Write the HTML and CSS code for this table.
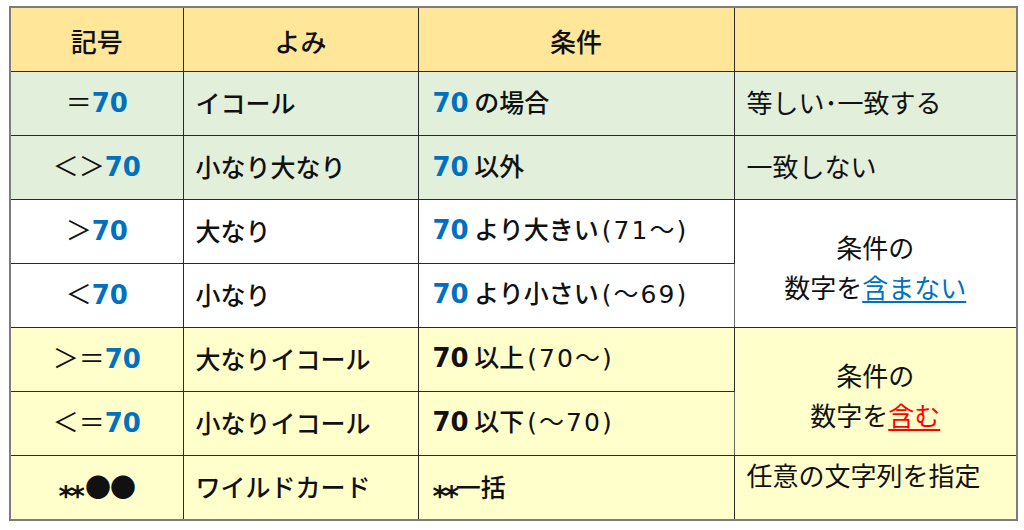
FILE: index.html
```html
<!DOCTYPE html>
<html lang="ja">
<head>
<meta charset="utf-8">
<link rel="stylesheet" href="styles.css">
</head>
<body>
<table class="tbl">
  <colgroup>
    <col class="c1"><col class="c2"><col class="c3"><col class="c4">
  </colgroup>
  <tr class="head">
    <th>記号</th><th>よみ</th><th>条件</th><th class="last"></th>
  </tr>
  <tr class="green">
    <td class="sym"><span class="op">＝</span><span class="num">70</span></td>
    <td class="yomi">イコール</td>
    <td class="cond"><span class="num">70</span> の場合</td>
    <td class="note last">等しい･一致する</td>
  </tr>
  <tr class="green">
    <td class="sym"><span class="op">＜＞</span><span class="num">70</span></td>
    <td class="yomi">小なり大なり</td>
    <td class="cond"><span class="num">70</span> 以外</td>
    <td class="note last">一致しない</td>
  </tr>
  <tr class="white">
    <td class="sym"><span class="op">＞</span><span class="num">70</span></td>
    <td class="yomi">大なり</td>
    <td class="cond"><span class="num">70</span> より大きい<span class="paren">(71～)</span></td>
    <td class="merged last" rowspan="2">条件の<br>数字を<span class="ul-blue">含まない</span></td>
  </tr>
  <tr class="white">
    <td class="sym"><span class="op">＜</span><span class="num">70</span></td>
    <td class="yomi">小なり</td>
    <td class="cond"><span class="num">70</span> より小さい<span class="paren">(～69)</span></td>
  </tr>
  <tr class="yellow">
    <td class="sym"><span class="op">＞＝</span><span class="num">70</span></td>
    <td class="yomi">大なりイコール</td>
    <td class="cond"><span class="numk">70</span> 以上<span class="paren">(70～)</span></td>
    <td class="merged last" rowspan="2">条件の<br>数字を<span class="ul-red">含む</span></td>
  </tr>
  <tr class="yellow">
    <td class="sym"><span class="op">＜＝</span><span class="num">70</span></td>
    <td class="yomi">小なりイコール</td>
    <td class="cond"><span class="numk">70</span> 以下<span class="paren">(～70)</span></td>
  </tr>
  <tr class="yellow">
    <td class="sym"><span class="ast">**</span><span class="dots">●●</span></td>
    <td class="yomi">ワイルドカード</td>
    <td class="cond"><span class="ast">**</span>一括</td>
    <td class="note top last">任意の文字列を指定</td>
  </tr>
</table>
</body>
</html>
```

FILE: styles.css
```css
html, body {
  margin: 0;
  padding: 0;
  background: #ffffff;
}
body {
  font-family: "Noto Sans CJK JP", "Noto Sans", sans-serif;
  color: #111111;
}
.tbl {
  margin: 6px 0 0 9px;
  width: 1007px;
  table-layout: fixed;
  border-collapse: collapse;
  border: 2px solid #7c7c7c;
}
.c1 { width: 173px; }
.c2 { width: 235px; }
.c3 { width: 316px; }
.c4 { width: 283px; }

.tbl th, .tbl td {
  border: 1px solid #2a2a2a;
  padding: 0 0 4px 0;
  font-size: 25px;
  line-height: 32px;
  height: 59px;
  white-space: nowrap;
}
.tbl th.last, .tbl td.last {
  border-left: 1px solid #6a6a6a;
}
.head th {
  background: #ffe699;
  font-weight: 500;
  font-size: 26px;
  text-align: center;
  height: 61px;
  padding: 2px 0 0 0;
}
.green td { background: #e2efda; }
.white td { background: #ffffff; }
.yellow td { background: #ffffcc; }

.sym {
  text-align: center;
}
.op {
  font-weight: 400;
  font-size: 26px;
}
.num {
  font-family: "DejaVu Sans", sans-serif;
  color: #0070c0;
  font-weight: 700;
  font-size: 26px;
}
.numk {
  font-family: "DejaVu Sans", sans-serif;
  font-weight: 700;
  font-size: 26px;
}
.yomi {
  font-weight: 500;
  padding-left: 12px !important;
}
.cond {
  font-weight: 500;
  padding-left: 14px !important;
}
.paren {
  font-family: "DejaVu Sans", "Noto Sans CJK JP", sans-serif;
  font-weight: 400;
  font-size: 25px;
  margin-left: 3px;
  letter-spacing: 2px;
}
.note {
  font-size: 26px !important;
  padding-left: 12px !important;
}
.note.top {
  vertical-align: top;
  height: 60px;
  padding: 3px 0 0 12px !important;
}
.merged {
  text-align: center;
  font-size: 26px !important;
  line-height: 40px !important;
  padding: 6px 0 0 0 !important;
}
.ul-blue {
  color: #0070c0;
  text-decoration: underline;
  text-underline-offset: 3px;
}
.ul-red {
  color: #ff0000;
  text-decoration: underline;
  text-underline-offset: 3px;
}
.ast {
  font-family: "DejaVu Sans", sans-serif;
  font-weight: 700;
  font-size: 28px;
  line-height: 1px;
  letter-spacing: -3px;
  vertical-align: -9px;
}
.dots {
  font-size: 26px;
  letter-spacing: -1px;
  margin-left: 3px;
}
```
